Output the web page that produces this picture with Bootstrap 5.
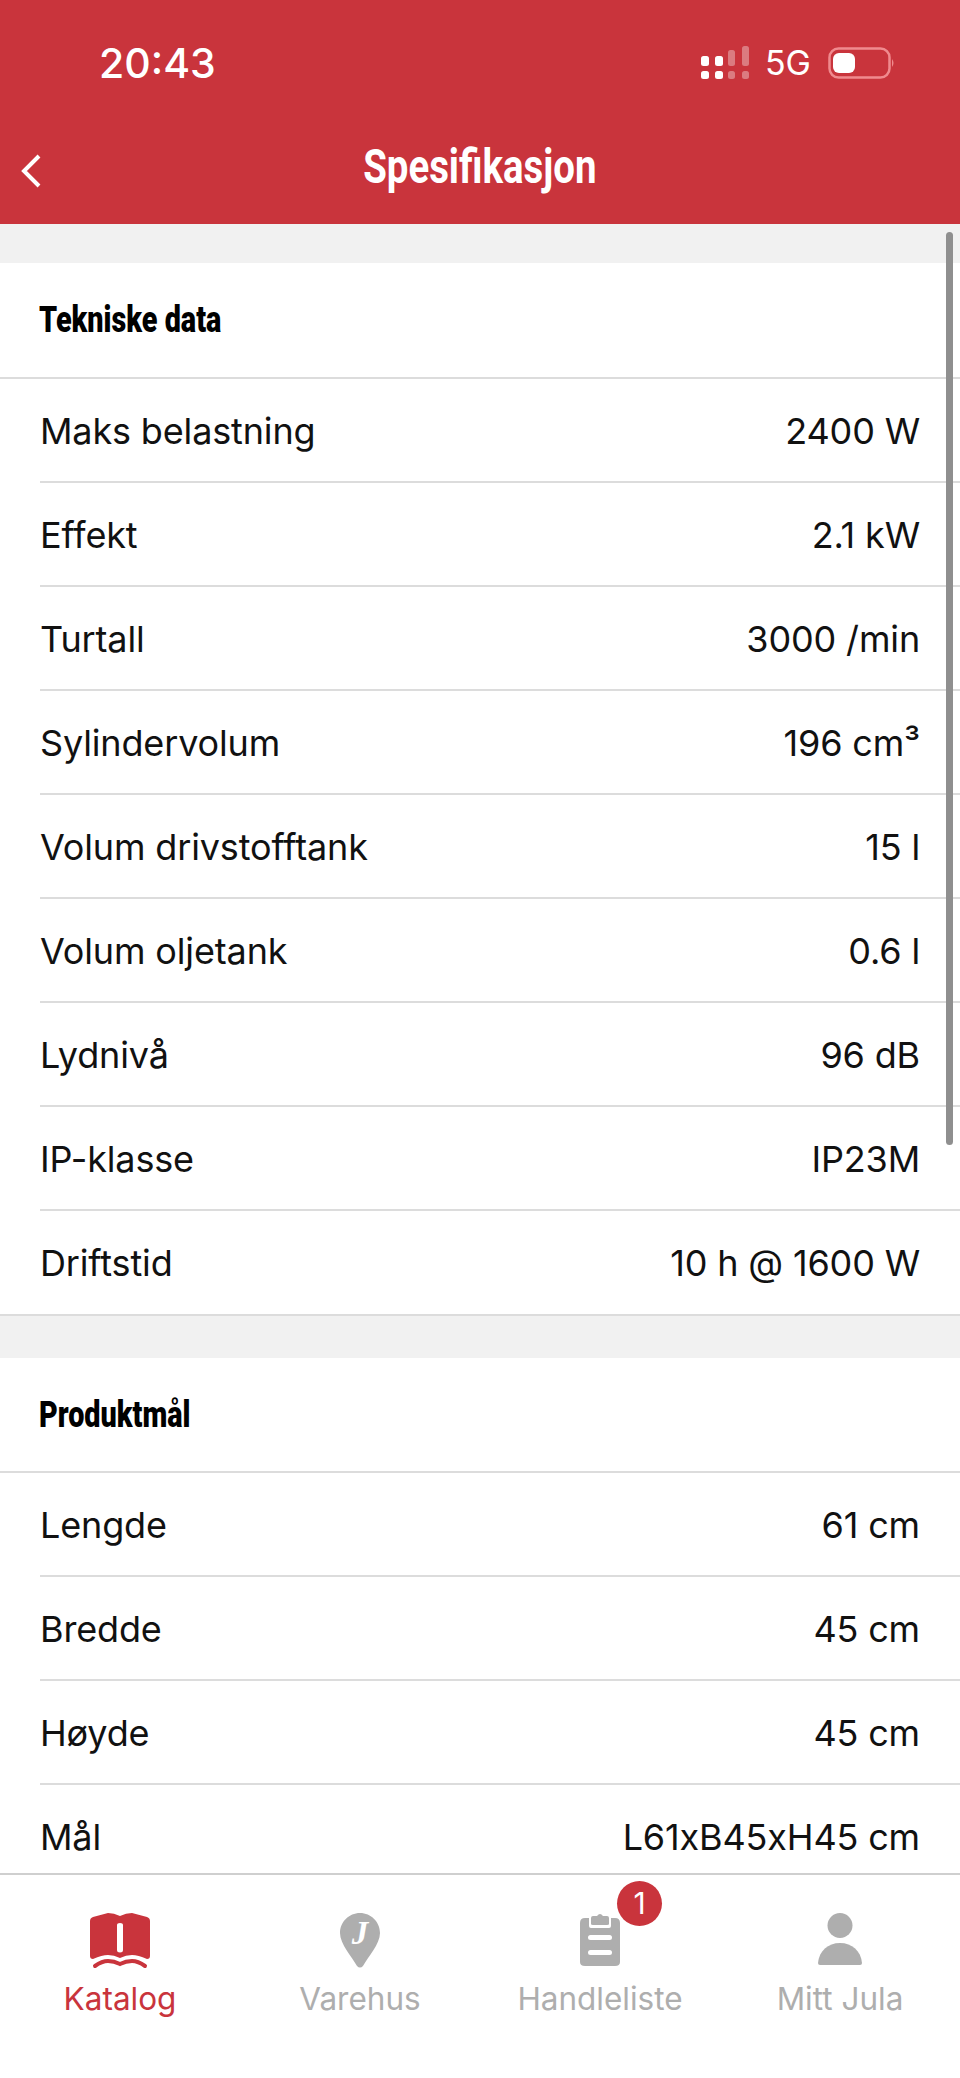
<!DOCTYPE html>
<html lang="no">
<head>
    <meta charset="UTF-8">
    <meta name="viewport" content="width=device-width, initial-scale=1">
    <title>Spesifikasjon</title>
    <link href="https://cdn.jsdelivr.net/npm/bootstrap@5.3.0/dist/css/bootstrap.min.css" rel="stylesheet">
    <style>
        body { font-family: Inter, "Liberation Sans", sans-serif; background: #fff; color: #111; }
        .app-shell { width: 960px; height: 2078px; overflow: hidden; }

        /* Rød topp */
        .top-bar { background: #c9343c; height: 224px; color: #fff; }
        .status-row { height: 126px; padding: 39px 65px 0 99px; }
        .clock { font-size: 41px; font-weight: 500; line-height: 48px; }
        .status-icons { margin-top: 4px; }
        .net-label { font-size: 34px; line-height: 40px; margin: 0 17px 0 16px; }
        .title-row { height: 98px; padding-bottom: 16px; }
        .page-title { font-family: Roboto, sans-serif; font-weight: 700; font-size: 48px; line-height: 60px; transform: scaleX(.8); }
        .back-btn { left: 20px; top: 27px; }

        /* Innhold */
        .scroll-area { background: #f1f1f1; min-height: 0; padding-top: 39px; }
        .spec-group { background: #fff; margin-bottom: 42px; }
        .spec-head { height: 115px; padding-left: 39px; border-bottom: 2px solid #dcdcdc; }
        .spec-group.closed .spec-head { height: 116px; }
        .spec-head span { font-family: Roboto, sans-serif; font-weight: 900; font-size: 36px; color: #000; transform: scaleX(.8); transform-origin: left center; }
        .spec-list .list-group-item { height: 104px; margin-left: 40px; padding: 1px 40px 0 0; font-size: 36px; letter-spacing: -.15px; color: #111; border-color: #dcdcdc; border-width: 0 0 2px; background: transparent; }
        .spec-list .list-group-item:last-child { height: 103px; border-bottom-width: 0; }
        .spec-group.closed { border-bottom: 2px solid #dcdcdc; }
        .scroll-thumb { right: 7px; top: 232px; width: 7px; height: 913px; border-radius: 4px; background: #8f8f8f; }

        /* Tab-meny */
        .tab-bar { height: 205px; border-top: 2px solid #cfcfcf; background: #fff; }
        .tab-item { padding-top: 38px; color: #aeaeae; font-size: 31.5px; line-height: 44px; }
        .tab-item.active-tab { color: #c9343c; }
        .tab-icon { height: 56px; margin-bottom: 8px; }
        .count-badge { left: 137px; top: 6px; width: 45px; height: 45px; border-radius: 50%; background: #c9343c; color: #fff; font-size: 30px; line-height: 45px; text-align: center; }
    </style>
</head>
<body>
<div class="app-shell d-flex flex-column position-relative">

    <header class="top-bar flex-shrink-0">
        <div class="status-row d-flex justify-content-between align-items-start">
            <span class="clock">20:43</span>
            <div class="status-icons d-flex align-items-center">
                <svg width="48" height="34" viewBox="0 0 48 34">
                    <g fill="#fff">
                        <rect x="0" y="10" width="8" height="10" rx="2.5"/>
                        <rect x="14" y="10" width="8" height="10" rx="2.5"/>
                        <rect x="0" y="25" width="8" height="8" rx="2.5"/>
                        <rect x="14" y="25" width="8" height="8" rx="2.5"/>
                    </g>
                    <g fill="#fff" opacity=".35">
                        <rect x="27" y="4" width="7" height="16" rx="2.5"/>
                        <rect x="41" y="0" width="7" height="20" rx="2.5"/>
                        <rect x="27" y="25" width="7" height="8" rx="2.5"/>
                        <rect x="41" y="25" width="7" height="8" rx="2.5"/>
                    </g>
                </svg>
                <span class="net-label">5G</span>
                <svg width="67" height="32" viewBox="0 0 67 32">
                    <rect x="1.5" y="1.5" width="60" height="29" rx="9" fill="none" stroke="#f08a8e" stroke-width="2.5"/>
                    <rect x="5" y="6" width="22" height="20" rx="6" fill="#fff"/>
                    <path d="M64 12 q3 4 0 8z" fill="#f08a8e"/>
                </svg>
            </div>
        </div>
        <div class="title-row position-relative d-flex justify-content-center align-items-center">
            <svg class="back-btn position-absolute" width="22" height="36" viewBox="0 0 22 36">
                <path d="M19 3 L4 18 L19 33" fill="none" stroke="#fff" stroke-width="4"/>
            </svg>
            <span class="page-title">Spesifikasjon</span>
        </div>
    </header>

    <main class="scroll-area flex-grow-1 overflow-hidden">
        <section class="spec-group closed">
            <div class="spec-head d-flex align-items-center"><span class="d-inline-block">Tekniske data</span></div>
            <ul class="spec-list list-group list-group-flush">
                <li class="list-group-item d-flex justify-content-between align-items-center"><span>Maks belastning</span><span>2400 W</span></li>
                <li class="list-group-item d-flex justify-content-between align-items-center"><span>Effekt</span><span>2.1 kW</span></li>
                <li class="list-group-item d-flex justify-content-between align-items-center"><span>Turtall</span><span>3000 /min</span></li>
                <li class="list-group-item d-flex justify-content-between align-items-center"><span>Sylindervolum</span><span>196 cm³</span></li>
                <li class="list-group-item d-flex justify-content-between align-items-center"><span>Volum drivstofftank</span><span>15 l</span></li>
                <li class="list-group-item d-flex justify-content-between align-items-center"><span>Volum oljetank</span><span>0.6 l</span></li>
                <li class="list-group-item d-flex justify-content-between align-items-center"><span>Lydnivå</span><span>96 dB</span></li>
                <li class="list-group-item d-flex justify-content-between align-items-center"><span>IP-klasse</span><span>IP23M</span></li>
                <li class="list-group-item d-flex justify-content-between align-items-center"><span>Driftstid</span><span>10 h @ 1600 W</span></li>
            </ul>
        </section>
        <section class="spec-group">
            <div class="spec-head d-flex align-items-center"><span class="d-inline-block">Produktmål</span></div>
            <ul class="spec-list list-group list-group-flush">
                <li class="list-group-item d-flex justify-content-between align-items-center"><span>Lengde</span><span>61 cm</span></li>
                <li class="list-group-item d-flex justify-content-between align-items-center"><span>Bredde</span><span>45 cm</span></li>
                <li class="list-group-item d-flex justify-content-between align-items-center"><span>Høyde</span><span>45 cm</span></li>
                <li class="list-group-item d-flex justify-content-between align-items-center"><span>Mål</span><span>L61xB45xH45 cm</span></li>
            </ul>
        </section>
    </main>
    <div class="scroll-thumb position-absolute"></div>

    <nav class="tab-bar flex-shrink-0 row g-0">
        <div class="col-3 tab-item active-tab text-center">
            <div class="tab-icon">
                <svg width="60" height="56" viewBox="0 0 60 56">
                    <path fill="#c9343c" fill-rule="evenodd" d="M0 8 Q0 5 3 4 L18 0 Q24 0 30 3 Q36 0 42 0 L57 4 Q60 5 60 8 V43 Q60 46 57 46 Q48 42 42 42 Q36 42 30 45 Q24 42 18 42 Q12 42 3 46 Q0 46 0 43 Z M27 12 V37 Q27 39.500 30 39.500 Q33 39.500 33 37 V12 Q33 10 30 10 Q27 10 27 12 Z"/>
                    <path fill="none" stroke="#c9343c" stroke-width="4" stroke-linecap="round" d="M5 53 Q12 48 18 48 Q24 48 30 51 Q36 48 42 48 Q48 48 55 53"/>
                </svg>
            </div>
            Katalog
        </div>
        <div class="col-3 tab-item text-center">
            <div class="tab-icon">
                <svg width="40" height="56" viewBox="0 0 40 56">
                    <path fill="#aeaeae" d="M20 0 C31 0 40 9 40 20 C40 31 28 44 23 53 Q20 56 17 53 C12 44 0 31 0 20 C0 9 9 0 20 0 Z"/>
                    <text x="20" y="31" fill="#fff" font-family="Liberation Serif, serif" font-weight="700" font-style="italic" font-size="33" text-anchor="middle">J</text>
                </svg>
            </div>
            Varehus
        </div>
        <div class="col-3 tab-item text-center position-relative">
            <div class="tab-icon">
                <svg width="40" height="54" viewBox="0 0 40 54">
                    <path fill="#aeaeae" d="M5 5 H9 V13 Q9 15 11 15 H29 Q31 15 31 13 V5 H35 Q40 5 40 10 V49 Q40 53 35 53 H5 Q0 53 0 49 V10 Q0 5 5 5 Z"/>
                    <path fill="#aeaeae" d="M11 5 Q11 3 13 3 H17 Q20 -1 23 3 H27 Q29 3 29 5 V11 Q29 12 27 12 H13 Q11 12 11 11 Z"/>
                    <rect x="8" y="22" width="24" height="5" rx="2.500" fill="#fff"/>
                    <rect x="8" y="37" width="24" height="5" rx="2.500" fill="#fff"/>
                </svg>
            </div>
            Handleliste
            <span class="count-badge position-absolute">1</span>
        </div>
        <div class="col-3 tab-item text-center">
            <div class="tab-icon">
                <svg width="44" height="54" viewBox="0 0 44 54">
                    <circle cx="22" cy="12.500" r="12.500" fill="#aeaeae"/>
                    <path fill="#aeaeae" d="M0 50 C1 38 10 30 22 30 C34 30 43 38 44 50 Q44 52 42 52 H2 Q0 52 0 50 Z"/>
                </svg>
            </div>
            Mitt Jula
        </div>
    </nav>
</div>
<script src="https://cdn.jsdelivr.net/npm/bootstrap@5.3.0/dist/js/bootstrap.bundle.min.js"></script>
</body>
</html>
